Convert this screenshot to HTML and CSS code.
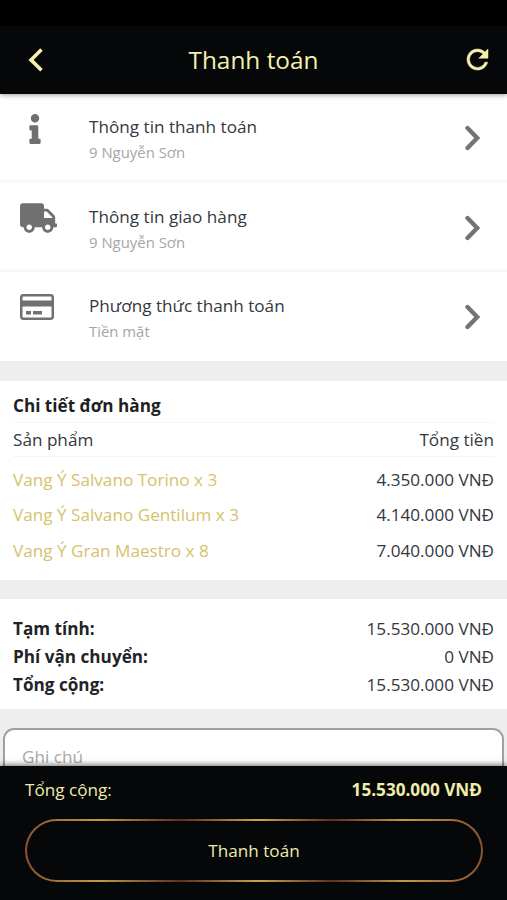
FILE: index.html
```html
<!DOCTYPE html>
<html lang="vi">
<head>
<meta charset="utf-8">
<meta name="viewport" content="width=device-width, initial-scale=1">
<title>Thanh toán</title>
<link rel="stylesheet" href="styles.css">
</head>
<body>
<div class="app">
  <div class="statusbar"></div>
  <header class="header">
    <svg class="back" viewBox="0 0 18 26"><path d="M14.5 2.5 4 12.9 14.5 23.3" fill="none" stroke="currentColor" stroke-width="3.6"/></svg>
    <h1 class="title">Thanh toán</h1>
    <svg class="refresh" viewBox="4 4 16 16"><path fill="currentColor" stroke="currentColor" stroke-width=".4" d="M17.65 6.35C16.2 4.9 14.21 4 12 4c-4.42 0-7.99 3.58-7.99 8s3.57 8 7.99 8c3.73 0 6.84-2.55 7.73-6h-2.08c-.82 2.33-3.04 4-5.65 4-3.31 0-6-2.69-6-6s2.69-6 6-6c1.66 0 3.14.69 4.22 1.78L13 11h7V4l-2.35 2.35z"/></svg>
  </header>

  <main class="content">
    <nav class="steps">
      <a class="step">
        <span class="step-icon"><svg class="icon-info" viewBox="0 0 192 512"><path fill="currentColor" d="M20 424.2h20V279.8H20c-11 0-20-9-20-20V212c0-11 9-20 20-20h112c11 0 20 9 20 20v212.200h20c11 0 20 9 20 20V492c0 11-9 20-20 20H20c-11 0-20-9-20-20v-47.800c0-11 9-20 20-20zM96 0C56.200 0 24 32.200 24 72s32.200 72 72 72 72-32.200 72-72S135.800 0 96 0z"/></svg></span>
        <span class="step-text"><span class="step-name">Thông tin thanh toán</span><span class="step-value">9 Nguyễn Sơn</span></span>
        <svg class="chevron" viewBox="0 0 18 26"><path d="M3.500 3 13.200 13 3.500 23" fill="none" stroke="currentColor" stroke-width="4.400" stroke-linecap="round"/></svg>
      </a>
      <a class="step">
        <span class="step-icon"><svg class="icon-truck" viewBox="0 0 640 512"><path fill="currentColor" d="M624 352h-16V243.900c0-12.700-5.100-24.900-14.100-33.900L494 110.100c-9-9-21.200-14.100-33.900-14.100H416V48c0-26.500-21.500-48-48-48H48C21.500 0 0 21.500 0 48v320c0 26.500 21.500 48 48 48h16c0 53 43 96 96 96s96-43 96-96h128c0 53 43 96 96 96s96-43 96-96h48c8.800 0 16-7.200 16-16v-32c0-8.800-7.200-16-16-16zM160 464c-26.500 0-48-21.500-48-48s21.500-48 48-48 48 21.500 48 48-21.500 48-48 48zm320 0c-26.500 0-48-21.500-48-48s21.500-48 48-48 48 21.500 48 48-21.500 48-48 48zm80-208H416V144h44.100l99.900 99.900V256z"/></svg></span>
        <span class="step-text"><span class="step-name">Thông tin giao hàng</span><span class="step-value">9 Nguyễn Sơn</span></span>
        <svg class="chevron" viewBox="0 0 18 26"><path d="M3.500 3 13.200 13 3.500 23" fill="none" stroke="currentColor" stroke-width="4.400" stroke-linecap="round"/></svg>
      </a>
      <a class="step">
        <span class="step-icon"><svg class="icon-card" viewBox="0 0 34 26"><rect x="1.250" y="1.250" width="31.500" height="23.500" rx="2.200" fill="none" stroke="currentColor" stroke-width="2.500"/><path fill="currentColor" d="M1 6.500h32v6H1zM6 17h5v3.500H6zM13 17h9v3.500h-9z"/></svg></span>
        <span class="step-text"><span class="step-name">Phương thức thanh toán</span><span class="step-value">Tiền mặt</span></span>
        <svg class="chevron" viewBox="0 0 18 26"><path d="M3.500 3 13.200 13 3.500 23" fill="none" stroke="currentColor" stroke-width="4.400" stroke-linecap="round"/></svg>
      </a>
    </nav>

    <section class="details">
      <h2 class="details-title">Chi tiết đơn hàng</h2>
      <div class="row head"><span>Sản phẩm</span><span>Tổng tiền</span></div>
      <div class="row item"><a>Vang Ý Salvano Torino x 3</a><span>4.350.000 VNĐ</span></div>
      <div class="row item"><a>Vang Ý Salvano Gentilum x 3</a><span>4.140.000 VNĐ</span></div>
      <div class="row item"><a>Vang Ý Gran Maestro x 8</a><span>7.040.000 VNĐ</span></div>
    </section>

    <section class="totals">
      <div class="row"><b>Tạm tính:</b><span>15.530.000 VNĐ</span></div>
      <div class="row"><b>Phí vận chuyển:</b><span>0 VNĐ</span></div>
      <div class="row"><b>Tổng cộng:</b><span>15.530.000 VNĐ</span></div>
    </section>

    <div class="note">Ghi chú</div>
  </main>

  <footer class="footer">
    <div class="row footer-total"><span>Tổng cộng:</span><b>15.530.000 VNĐ</b></div>
    <button class="pay">Thanh toán</button>
  </footer>
</div>
</body>
</html>
```
FILE: styles.css
```css
* { box-sizing: border-box; }
body {
  margin: 0;
  font-family: "Open Sans", "Noto Sans", sans-serif;
  font-size: 17.15px;
  color: #36373b;
  background: #eee;
}
.app { height: 900px; display: flex; flex-direction: column; overflow: hidden; }
.statusbar { height: 26px; flex: none; background: #000; }
.header {
  height: 68px;
  flex: none;
  display: grid;
  grid-template-columns: 60px 1fr 60px;
  align-items: center;
  color: #f4f0ae;
  background: #050708;
  box-shadow: 0 1px 5px rgba(0, 0, 0, .4);
  z-index: 1;
}
.back { width: 18px; height: 26px; margin-left: 27px; }
.title { margin: 0; text-align: center; font-size: 24.4px; font-weight: 400; line-height: 32px; }
.refresh { width: 21px; height: 21px; margin: -1px 0 0 20px; overflow: visible; }

.content { flex: 1; min-height: 0; overflow: hidden; }
.steps { background: #fff; }
.step {
  display: flex;
  height: 89px;
  padding: 20px 25px 0 20px;
  border-bottom: 3px solid #f8f8f8;
}
.step + .step { padding-top: 21px; }
.step:last-child { border-bottom: 0; }
.step-icon { width: 69px; color: #707070; }
.step-icon svg { display: block; }
.icon-info { width: 12px; height: 30px; margin-left: 9px; }
.icon-truck { width: 37px; height: 30px; margin-top: -1px; }
.icon-card { width: 34px; height: 26px; margin-top: 1px; }
.step-text { flex: 1; display: flex; flex-direction: column; }
.step-name { line-height: 26px; }
.step-value { line-height: 24px; font-size: 14.9px; color: #a6a6a6; }
.chevron { width: 18px; height: 26px; margin-top: 11px; color: #747474; }

.row { display: flex; justify-content: space-between; }
.details { margin-top: 20px; height: 199px; padding: 7px 13px 0; background: #fff; }
.details-title { margin: 0; height: 34px; line-height: 35px; font-size: 17.15px; font-weight: 700; color: #1d1f22; }
.head { height: 35px; line-height: 33px; border: solid #f5f5f5; border-width: 1px 0; margin-bottom: 5px; }
.item { line-height: 35.300px; }
.item a { color: #d5c26c; }

.totals { margin-top: 19px; height: 110px; padding: 16px 13px 0; line-height: 28px; background: #fff; }
.totals b { color: #222326; }
.note {
  margin: 19px 3px 0;
  height: 110px;
  padding: 13px 17px;
  line-height: 28px;
  color: #a8a8a8;
  background: #fff;
  border: 2px solid #a0a0a0;
  border-radius: 11px;
}

.footer {
  height: 134px;
  flex: none;
  padding: 10px 24px 0 25px;
  color: #eeedac;
  background: #050708;
  box-shadow: 0 -1px 6px rgba(0, 0, 0, .6);
  z-index: 1;
}
.footer-total { line-height: 28px; }
.footer-total b { margin-right: 1px; }
.pay {
  display: block;
  width: 100%;
  height: 63px;
  margin-top: 15px;
  font: inherit;
  color: inherit;
  border: 2px solid transparent;
  border-radius: 32px;
  background:
    linear-gradient(#050708, #050708) padding-box,
    linear-gradient(90deg, #8a5330, #c39a45 16%, #5d3020 34%, #c9a64e 51%, #5d3020 67%, #c39a45 83%, #8a5330) border-box;
}
```
